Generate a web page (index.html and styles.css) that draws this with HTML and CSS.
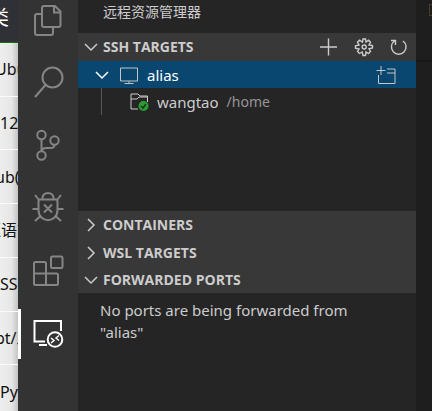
FILE: index.html
```html
<!DOCTYPE html>
<html lang="zh-CN">
<head>
<meta charset="utf-8">
<title>远程资源管理器</title>
<link rel="stylesheet" href="styles.css">
</head>
<body>
<div class="desktop">
  <div class="backdrop">
    <div class="backdrop-head">类</div>
    <ul class="backdrop-list">
      <li class="shifted">Ubu</li>
      <li>12</li>
      <li class="shifted">ub(</li>
      <li class="cjk">汇语言</li>
      <li>SSH</li>
      <li class="shifted">pt/工</li>
      <li>Pyt</li>
    </ul>
  </div>
  <nav class="activity" aria-label="Activity bar">
    <button class="activity-item" aria-label="Explorer"><svg viewBox="0 0 60 63"><path d="M26 19h11l5.500 5.500V38q0 2-2 2H26q-2 0-2-2V21q0-2 2-2zM36 19v6.500h6.500M24 27h-5q-2 0-2 2v17q0 2 2 2h14q2 0 2-2v-6"/></svg></button>
    <button class="activity-item" aria-label="Search"><svg viewBox="0 0 60 63"><circle cx="34.500" cy="27.500" r="10"/><path d="M27.500 35L17 47"/></svg></button>
    <button class="activity-item" aria-label="Source control"><svg viewBox="0 0 60 63"><circle cx="23.500" cy="22" r="4.200"/><circle cx="36.500" cy="27.500" r="4.200"/><circle cx="23.500" cy="42.500" r="4.200"/><path d="M23.500 26v12M36.500 32q0 3-4 3h-4q-5 0-5 4"/></svg></button>
    <button class="activity-item" aria-label="Run"><svg viewBox="0 0 60 63"><path d="M24.500 23c-1-8 12-8 11 0M22 23.500h16q1.500 0 1.500 1.500v9c0 13.500-19 13.500-19 0v-9q0-1.500 1.500-1.500zM21 24l-4-5M39 24l4-5M20 33h-5.500M40 33h5.500M22 40.500l-5 4.500M38 40.500l5 4.500M26 28.500l8 8M34 28.500l-8 8"/></svg></button>
    <button class="activity-item" aria-label="Extensions"><svg viewBox="0 0 60 63"><path d="M17.500 23h9q1.500 0 1.500 1.500v10h10.500q1.500 0 1.500 1.500v8.500q0 1.500-1.500 1.500h-21q-1.500 0-1.500-1.500v-20q0-1.500 1.500-1.500zM16 34.500h12V46"/><rect x="33" y="17.500" width="11.500" height="11.500" rx="1.500"/></svg></button>
    <button class="activity-item active" aria-label="Remote Explorer"><svg viewBox="0 0 60 63"><path d="M43 29V19H16.500v20.500H27M21 43h8"/><circle cx="37" cy="37.500" r="7.300"/><path class="thin" d="M33 36l3 2.500-3 2.500M41 33.500l-3 2.500 3 2.500"/></svg></button>
  </nav>
  <aside class="sidebar">
    <h1 class="title">远程资源管理器</h1>
    <section class="targets">
      <header class="section-head">
        <button class="toggle"><svg class="chevron" viewBox="0 0 16 16"><path d="M2 5l6 6 6-6"/></svg>SSH TARGETS</button>
        <div class="actions">
          <button aria-label="Add"><svg viewBox="0 0 20 20"><path d="M9.500 1.500v17M1 10h17"/></svg></button>
          <button aria-label="Configure"><svg viewBox="0 0 20 20"><path d="M8.500 5l.5-3h2.500l.5 3 2.500-1.800 2 2L15 8l3.500.5V11l-3.500.8 1.500 2.700-2 2L12 15l-.5 3.500H9L8.200 15l-2.700 1.500-2-2L5 12l-3.500-.8V8.700L5 8 3.500 5.200l2-2z"/><circle cx="10.200" cy="10" r="2"/></svg></button>
          <button aria-label="Refresh"><svg viewBox="0 0 20 20"><path d="M5.500 4A7.300 7.300 0 1 0 14 4M2 3.500h4.500V8"/></svg></button>
        </div>
      </header>
      <div class="row selected">
        <svg class="chevron" viewBox="0 0 16 16"><path d="M2 5l6 6 6-6"/></svg>
        <svg class="row-icon" viewBox="0 0 20 20"><path d="M1.500 3h17v13h-17zM10 16v2.500M5.500 18.500h9"/></svg>
        <span class="label">alias</span>
        <button class="open" aria-label="Open in new window"><svg viewBox="0 0 20 20"><path d="M5 1v9M.5 5.500h9M2.500 10v8.500h16.500V4H11M11 8h8"/></svg></button>
      </div>
      <div class="row child">
        <svg class="row-icon" viewBox="0 0 20 20"><path d="M9 17H2V2h7l2 2h7.500v6M2 7h6l2-2h8"/><circle class="ok" cx="14.500" cy="14" r="5"/><path class="tick" d="M12 14l2 2 3-4"/></svg>
        <span class="label">wangtao</span><span class="path">/home</span>
      </div>
    </section>
    <section><header class="section-head"><button class="toggle"><svg class="chevron" viewBox="0 0 16 16"><path d="M5 2l6 6-6 6"/></svg>CONTAINERS</button></header></section>
    <section><header class="section-head"><button class="toggle"><svg class="chevron" viewBox="0 0 16 16"><path d="M5 2l6 6-6 6"/></svg>WSL TARGETS</button></header></section>
    <section>
      <header class="section-head last"><button class="toggle"><svg class="chevron" viewBox="0 0 16 16"><path d="M2 5l6 6 6-6"/></svg>FORWARDED PORTS</button></header>
      <p class="message">No ports are being forwarded from "alias"</p>
    </section>
  </aside>
  <main class="editor"><div class="editor-top"><span class="file-mark"></span></div></main>
</div>
</body>
</html>
```
FILE: styles.css
```css
* { box-sizing: border-box; }
body {
  margin: 0;
  background: #1e1e1e;
  color: #cccccc;
  font: 15px/22px "Noto Sans", "Noto Sans CJK SC", sans-serif;
}
button { padding: 0; border: 0; background: none; color: inherit; font: inherit; }
svg { display: block; fill: none; stroke: currentColor; }
.desktop {
  display: grid;
  grid-template-columns: 18px 60px 1fr 16px;
  height: 100vh;
  overflow: hidden;
}
.backdrop {
  overflow: hidden;
  background: linear-gradient(90deg, #eeeeee, #e6e6e6 65%, #c4c4c4);
  color: #111111;
  font-size: 16px;
  white-space: nowrap;
}
.backdrop-head {
  display: flex;
  justify-content: flex-end;
  height: 43px;
  padding: 7px 9px 0 0;
  border-bottom: 1px solid #087a08;
  background: #303136;
  color: #ffffff;
  font-size: 20px;
}
.backdrop-list {
  display: grid;
  grid-auto-rows: 1fr;
  height: 376px;
  margin: 0;
  padding: 0;
  list-style: none;
}
.backdrop-list li {
  display: flex;
  align-items: center;
  border-bottom: 1px solid #fafafa;
}
.backdrop-list .shifted { text-indent: -5px; }
.backdrop-list .cjk { text-indent: -15px; }
.activity { margin-top: -13px; background: #333333; }
.activity-item { display: block; width: 100%; height: 63px; color: #858585; }
.activity-item svg { width: 60px; height: 63px; stroke-width: 2; }
.activity-item.active {
  background: linear-gradient(#ffffff, #ffffff) left center / 3px 50px no-repeat;
  color: #ffffff;
}
.activity-item .thin { stroke-width: 1.5; }
.sidebar { min-width: 0; background: #252526; }
.title { margin: 0; padding: 1px 25px 10px; font-size: 14px; font-weight: 400; line-height: 22px; }
.targets { height: 178px; }
.section-head {
  display: flex;
  align-items: center;
  justify-content: space-between;
  height: 28px;
  padding: 0 7px 0 5px;
  background: #383838;
}
.section-head.last { height: 26px; }
.toggle {
  display: flex;
  align-items: center;
  gap: 4px;
  font: 700 14px/20px "Open Sans", sans-serif;
}
.chevron { width: 16px; height: 16px; stroke-width: 1.5; }
.actions { display: flex; gap: 15px; }
.actions svg, .open svg, .row-icon { width: 20px; height: 20px; }
.actions svg { stroke-width: 1.4; }
.row { display: flex; align-items: center; height: 27px; }
.selected { padding: 0 20px 0 16px; background: #094771; color: #ffffff; }
.selected .row-icon { margin: 0 8px 0 9px; color: #c5c5c5; }
.open { margin-left: auto; color: #c5c5c5; }
.child { margin-left: 23px; padding-left: 27px; border-left: 1px solid #585858; }
.child .row-icon { margin-right: 8px; }
.path { margin-left: 8px; color: #969696; font-size: 14px; }
.ok { fill: #2e9b35; stroke: none; }
.tick { stroke: #17351a; stroke-width: 1.5; }
.message { margin: 0; padding: 6px 40px 0 22px; }
.editor { background: #1e1e1e; }
.editor-top { height: 62px; padding: 4px 0 0 13px; border-bottom: 2px solid #161616; }
.file-mark { display: block; height: 12px; border: 1px solid #4b3d2a; border-right: 0; }
```
